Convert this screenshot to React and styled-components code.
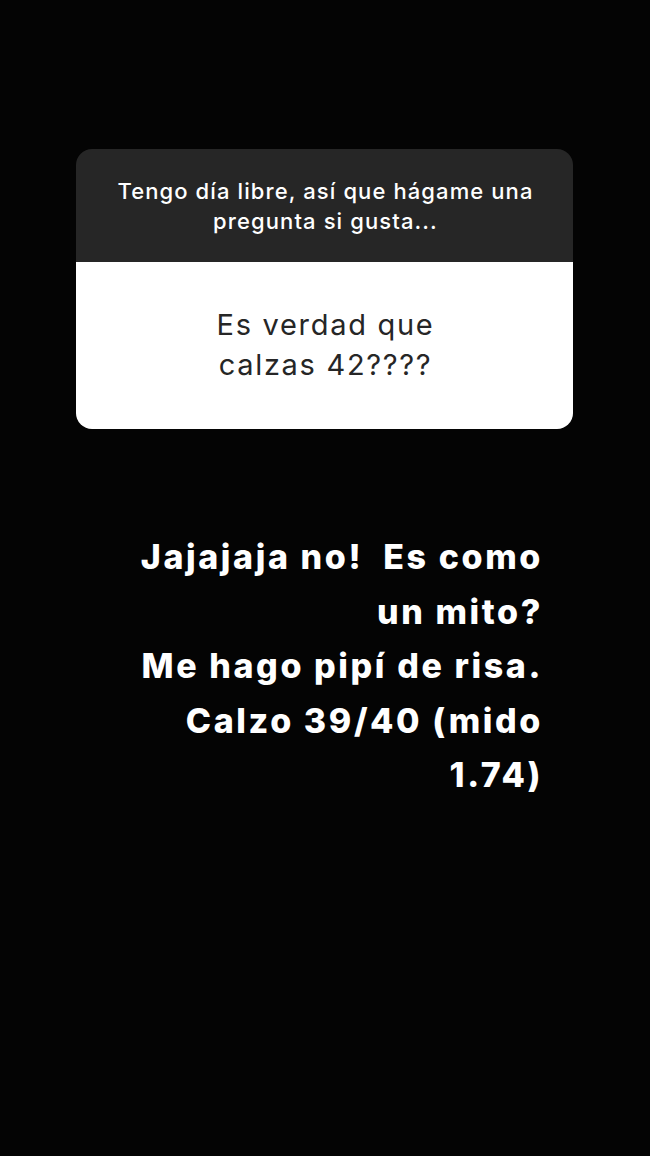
import styled, { createGlobalStyle } from "styled-components";

const GlobalStyle = createGlobalStyle`
  html, body {
    margin: 0;
    padding: 0;
    background: #040404;
  }
  * {
    box-sizing: border-box;
  }
`;

const Story = styled.div`
  width: 650px;
  height: 1156px;
  background: #040404;
  padding-top: 149px;
  display: flex;
  flex-direction: column;
  align-items: center;
  font-family: Inter, "Liberation Sans", sans-serif;
  overflow: hidden;
`;

const QuestionCard = styled.div`
  width: 497px;
  margin-left: -1px;
  border-radius: 16px;
  overflow: hidden;
  display: flex;
  flex-direction: column;
`;

const Prompt = styled.div`
  background: #262626;
  color: #ffffff;
  height: 113px;
  padding: 0 10px 0 12px;
  display: flex;
  align-items: center;
  justify-content: center;
  text-align: center;
  font-size: 22px;
  font-weight: 500;
  letter-spacing: 1.1px;
  line-height: 30px;
`;

const Question = styled.div`
  background: #ffffff;
  color: #262626;
  height: 167px;
  padding: 0 0 2px 2px;
  display: flex;
  align-items: center;
  justify-content: center;
  text-align: center;
  font-size: 29px;
  font-weight: 400;
  letter-spacing: 1.7px;
  line-height: 40px;
`;

const Answer = styled.p`
  width: 650px;
  margin: 101px 0 0;
  padding-right: 107px;
  text-align: right;
  color: #ffffff;
  font-size: 34px;
  font-weight: 800;
  letter-spacing: 2.6px;
  line-height: 54.5px;
  white-space: pre;
`;

export default function App() {
  return (
    <>
      <GlobalStyle />
      <Story>
        <QuestionCard>
          <Prompt>
            Tengo día libre, así que hágame una
            <br />
            pregunta si gusta...
          </Prompt>
          <Question>
            Es verdad que
            <br />
            calzas 42????
          </Question>
        </QuestionCard>
        <Answer>
          {"Jajajaja no!  Es como\nun mito?\nMe hago pipí de risa.\nCalzo 39/40 (mido\n1.74)"}
        </Answer>
      </Story>
    </>
  );
}
